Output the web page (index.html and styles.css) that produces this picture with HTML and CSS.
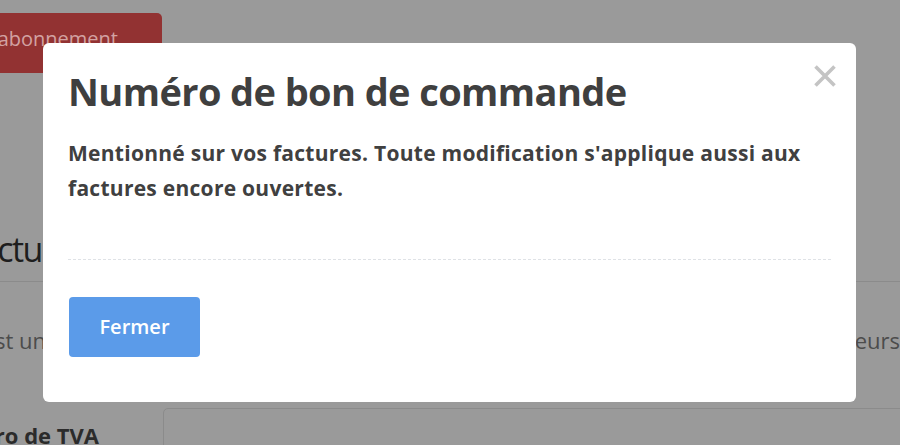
FILE: index.html
```html
<!DOCTYPE html>
<html lang="fr">
<head>
<meta charset="utf-8">
<title>Numéro de bon de commande</title>
<link rel="stylesheet" href="styles.css">
</head>
<body>
<div class="page">
  <div class="topbar">
    <button class="btn-danger" type="button">Résilier l'abonnement</button>
  </div>
  <h2 class="section-title">Facturation</h2>
  <div class="card">
    <div class="card-row">
      <span class="row-left">Ce numéro est unique</span>
      <span class="row-right">visible par les utilisateurs</span>
    </div>
    <div class="field">
      <label class="field-label">Numéro de TVA</label>
      <div class="field-input"></div>
    </div>
  </div>
</div>

<div class="overlay">
  <div class="modal" role="dialog">
    <button class="modal-close" type="button" aria-label="Fermer">
      <svg width="24" height="24" viewBox="0 0 24 24"><path d="M2.5 2.5 L21.5 21.5 M21.5 2.5 L2.5 21.5" stroke="#c4c4c4" stroke-width="3.6" fill="none"/></svg>
    </button>
    <h1 class="modal-title">Numéro de bon de commande</h1>
    <p class="modal-text">Mentionné sur vos factures. Toute modification s'applique aussi aux factures encore ouvertes.</p>
    <div class="modal-divider"></div>
    <button class="btn-primary" type="button">Fermer</button>
  </div>
</div>
</body>
</html>
```
FILE: styles.css
```css
html, body {
  margin: 0;
  padding: 0;
  overflow: hidden;
}
body {
  width: 900px;
  height: 445px;
  background: #9a9a9a;
  font-family: "Open Sans", "Noto Sans", sans-serif;
  position: relative;
}

/* background page (already dimmed by overlay) */
.page {
  height: 445px;
  overflow: hidden;
  display: flex;
  flex-direction: column;
}
.topbar {
  padding-top: 13px;
  display: flex;
  flex-shrink: 0;
}
.btn-danger {
  margin-left: -100px;
  width: 262px;
  height: 60px;
  border: 0;
  border-radius: 5px;
  background: #923232;
  color: #d2a2a2;
  font-family: inherit;
  font-size: 20px;
  line-height: 28px;
  display: flex;
  align-items: flex-start;
  justify-content: flex-end;
  padding: 12px 44px 0 0;
  white-space: nowrap;
}
.section-title {
  flex-shrink: 0;
  margin: 156px 0 0 -36px;
  font-size: 34px;
  line-height: 40px;
  font-weight: 400;
  letter-spacing: -1.6px;
  color: #1e1e1e;
  white-space: nowrap;
}
.card {
  flex-shrink: 0;
  margin-top: 12px;
  border-top: 1px solid #8b8b8b;
  display: flex;
  flex-direction: column;
}
.card-row {
  padding-top: 43px;
  display: flex;
  justify-content: space-between;
  font-size: 22px;
  line-height: 30px;
  color: #4c4c4c;
  white-space: nowrap;
}
.row-left {
  margin-left: -137px;
}
.row-right {
  margin-right: 0;
}
.field {
  margin-top: 53px;
  display: flex;
  align-items: flex-start;
}
.field-label {
  width: 99px;
  margin-top: 12px;
  display: flex;
  justify-content: flex-end;
  white-space: nowrap;
  font-size: 22px;
  line-height: 30px;
  font-weight: 700;
  color: #2b2b2b;
}
.field-input {
  margin-left: 64px;
  flex: 1;
  margin-right: -20px;
  height: 60px;
  border: 1px solid #8b8b8b;
  border-radius: 5px;
}

/* modal */
.overlay {
  position: fixed;
  inset: 0;
  padding: 43px 0 0 43px;
}
.modal {
  position: relative;
  width: 813px;
  box-sizing: border-box;
  background: #ffffff;
  border-radius: 6px;
  padding: 25px 25px 45px 25px;
  display: flex;
  flex-direction: column;
  align-items: flex-start;
}
.modal-close {
  position: absolute;
  top: 21px;
  right: 19px;
  width: 24px;
  height: 24px;
  padding: 0;
  border: 0;
  background: none;
  display: block;
}
.modal-close svg {
  display: block;
}
.modal-title {
  margin: 0;
  font-size: 38px;
  line-height: 46px;
  font-weight: 700;
  letter-spacing: -0.6px;
  color: #3f3f3f;
}
.modal-text {
  margin: 22px 0 0 0;
  font-size: 21px;
  line-height: 35px;
  font-weight: 700;
  letter-spacing: 0.27px;
  color: #404040;
}
.modal-divider {
  align-self: stretch;
  margin-top: 53px;
  border-top: 1px dashed #dfe2e6;
}
.btn-primary {
  margin-top: 37px;
  margin-left: 1px;
  width: 131px;
  height: 60px;
  border: 0;
  border-radius: 4px;
  background: #5b9be9;
  color: #ffffff;
  font-family: inherit;
  font-size: 20px;
  font-weight: 600;
  line-height: 28px;
  padding: 0;
}
```
